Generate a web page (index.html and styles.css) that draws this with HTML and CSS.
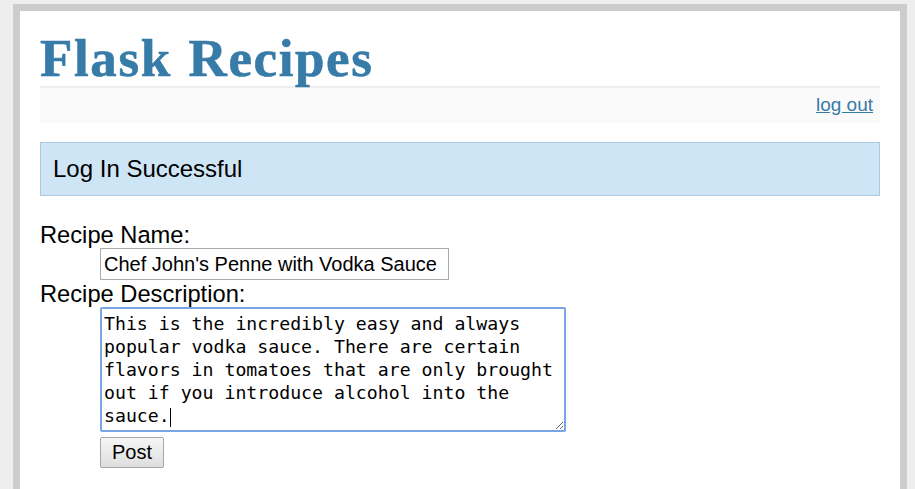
FILE: index.html
```html
<!DOCTYPE html>
<html lang="en">
<head>
<meta charset="utf-8">
<title>Flask Recipes</title>
<link rel="stylesheet" href="styles.css">
</head>
<body>
<div class="page">
  <h1 class="title">Flask Recipes</h1>
  <div class="metanav"><a href="#" class="logout">log out</a></div>
  <div class="flash">Log In Successful</div>
  <form class="add-entry">
    <div class="label first">Recipe Name:</div>
    <div class="field"><input type="text" class="name-input" value="Chef John's Penne with Vodka Sauce"></div>
    <div class="label">Recipe Description:</div>
    <div class="field area-wrap">
      <textarea class="desc">This is the incredibly easy and always popular vodka sauce. There are certain flavors in tomatoes that are only brought out if you introduce alcohol into the sauce.</textarea>
      <span class="caret"></span>
    </div>
    <div class="field"><button type="button" class="post">Post</button></div>
  </form>
</div>
</body>
</html>
```
FILE: styles.css
```css
html, body {
  margin: 0;
  padding: 0;
  background: #eeeeee;
  font-family: "Liberation Sans", Arial, sans-serif;
  color: #000;
}

.page {
  margin: 4px 8px 0 13px;
  border: 7px solid #cccccc;
  background: #ffffff;
  padding: 19px 20px 40px 20px;
  min-height: 500px;
}

.title {
  margin: 0;
  padding: 0;
  font-family: "Liberation Serif", Georgia, serif;
  font-weight: bold;
  font-size: 53px;
  letter-spacing: 1.6px;
  word-spacing: 2px;
  line-height: 56px;
  color: #377ba8;
  border-bottom: 2px solid #eeeeee;
  -webkit-text-stroke: 0.6px #377ba8;
}

.metanav {
  background: #fafafa;
  text-align: right;
  padding: 6px 7px 7px;
  line-height: 22px;
  font-size: 19px;
}

.logout {
  color: #377ba8;
  text-decoration: underline;
}

.flash {
  margin-top: 19px;
  background: #cee5f5;
  border: 1px solid #aacbe2;
  padding: 13px 12px;
  font-size: 24px;
  line-height: 26px;
}

.add-entry {
  margin: 0;
}

.label {
  font-size: 23.7px;
  line-height: 25px;
}

.label.first {
  margin-top: 27px;
}

.field {
  margin-left: 60px;
}

.name-input {
  display: block;
  box-sizing: border-box;
  width: 349px;
  height: 32px;
  margin: 0 0 2px 0;
  padding: 0 3px;
  border: 1px solid #a9a9a9;
  font-family: "Liberation Sans", Arial, sans-serif;
  font-size: 20px;
  color: #000;
  background: #fff;
}

.area-wrap {
  position: relative;
  width: 466px;
}

.desc {
  display: block;
  box-sizing: border-box;
  width: 466px;
  height: 125px;
  margin: 0;
  padding: 3px 2px;
  border: 2px solid #7aa5e4;
  border-radius: 2px;
  outline: none;
  font-family: "DejaVu Sans Mono", Consolas, monospace;
  font-size: 18.2px;
  line-height: 23px;
  color: #000;
  background: #fff;
  overflow: hidden;
}

.caret {
  position: absolute;
  left: 70px;
  top: 101px;
  width: 1px;
  height: 19px;
  background: #000;
}

.post {
  display: block;
  box-sizing: border-box;
  margin-top: 5px;
  width: 64px;
  height: 31px;
  padding: 0;
  border: 1px solid #a6a6a6;
  border-radius: 2px;
  background: linear-gradient(#f6f6f6, #dedede);
  font-family: "Liberation Sans", Arial, sans-serif;
  font-size: 20px;
  color: #000;
}
```
